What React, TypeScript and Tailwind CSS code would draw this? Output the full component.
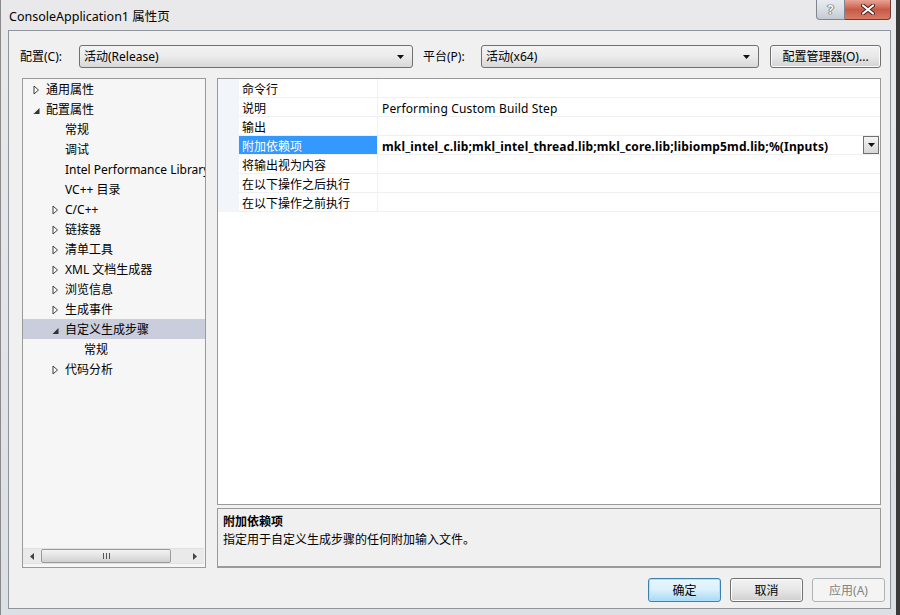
import React from "react";

const font = "font-['Noto_Sans','Noto_Sans_CJK_SC',sans-serif]";

type TreeItem = {
  label: string;
  level: number;
  kind: "collapsed" | "expanded" | "leaf";
  selected?: boolean;
};

const treeItems: TreeItem[] = [
  { label: "通用属性", level: 0, kind: "collapsed" },
  { label: "配置属性", level: 0, kind: "expanded" },
  { label: "常规", level: 1, kind: "leaf" },
  { label: "调试", level: 1, kind: "leaf" },
  { label: "Intel Performance Library", level: 1, kind: "leaf" },
  { label: "VC++ 目录", level: 1, kind: "leaf" },
  { label: "C/C++", level: 1, kind: "collapsed" },
  { label: "链接器", level: 1, kind: "collapsed" },
  { label: "清单工具", level: 1, kind: "collapsed" },
  { label: "XML 文档生成器", level: 1, kind: "collapsed" },
  { label: "浏览信息", level: 1, kind: "collapsed" },
  { label: "生成事件", level: 1, kind: "collapsed" },
  { label: "自定义生成步骤", level: 1, kind: "expanded", selected: true },
  { label: "常规", level: 2, kind: "leaf" },
  { label: "代码分析", level: 1, kind: "collapsed" },
];

const props = [
  { name: "命令行", value: "" },
  { name: "说明", value: "Performing Custom Build Step" },
  { name: "输出", value: "" },
  {
    name: "附加依赖项",
    value: "mkl_intel_c.lib;mkl_intel_thread.lib;mkl_core.lib;libiomp5md.lib;%(Inputs)",
    selected: true,
  },
  { name: "将输出视为内容", value: "" },
  { name: "在以下操作之后执行", value: "" },
  { name: "在以下操作之前执行", value: "" },
];

const indent = ["pl-[10px]", "pl-[29px]", "pl-[48px]"];

const Arrow = ({ kind }: { kind: TreeItem["kind"] }) => {
  if (kind === "collapsed")
    return (
      <svg width="7" height="10" viewBox="0 0 7 10" className="shrink-0">
        <path d="M1 1 L5.5 5 L1 9 Z" fill="#fff" stroke="#3c3c3c" strokeWidth="1" />
      </svg>
    );
  if (kind === "expanded")
    return (
      <svg width="7" height="10" viewBox="0 0 7 10" className="shrink-0">
        <path d="M6.5 3 L6.5 9 L0.5 9 Z" fill="#333" />
      </svg>
    );
  return <span className="w-[7px] shrink-0" />;
};

const DownTri = () => (
  <svg width="7" height="4" viewBox="0 0 7 4">
    <path d="M0 0 L7 0 L3.5 4 Z" fill="#111" />
  </svg>
);

const Combo = ({ text, w }: { text: string; w: string }) => (
  <div
    className={`${w} h-[23px] flex items-center justify-between px-[4px] pr-[8px] border border-[#707070] rounded-[3px] bg-gradient-to-b from-[#f3f3f3] via-[#ebebeb] to-[#d8d8d8] text-[12px] text-black`}
  >
    <span>{text}</span>
    <DownTri />
  </div>
);

const Button = ({
  text,
  variant,
}: {
  text: string;
  variant: "default" | "normal" | "disabled";
}) => {
  const style =
    variant === "default"
      ? "border-[#3c7fb1] bg-gradient-to-b from-[#eaf6fd] via-[#d9f0fc] to-[#a7d9f5] shadow-[inset_0_0_0_1px_#a9e1ff]"
      : variant === "disabled"
        ? "border-[#adb2b5] bg-[#f4f4f4] text-[#838383]"
        : "border-[#707070] bg-gradient-to-b from-[#f2f2f2] via-[#e6e6e6] to-[#cfcfcf] shadow-[inset_0_0_0_1px_#fcfcfc]";
  return (
    <div
      className={`w-[73px] h-[24px] flex items-center justify-center pt-[2px] border rounded-[3px] text-[12px] ${style}`}
    >
      {text}
    </div>
  );
};

export default function App() {
  return (
    <div
      className={`${font} w-[900px] h-[615px] flex flex-col bg-gradient-to-b from-[#e9e9eb] to-[#dcdfe3] border-l border-[#8a8a8a] overflow-hidden text-black`}
    >
      {/* title bar */}
      <div className="h-[30px] flex items-start shrink-0">
        <div className="pl-[8px] pt-[9px] text-[12.5px] leading-[16px] text-black flex-1">
          ConsoleApplication1 属性页
        </div>
        <div className="flex mr-[5px]">
          <div className="w-[29px] h-[20px] flex items-center justify-center border border-t-0 border-[#7d8690] rounded-bl-[4px] bg-gradient-to-b from-[#e8ecf0] via-[#d9dee4] to-[#c3cad2]">
            <span className="text-[13px] font-bold leading-none text-white [text-shadow:0_0_1px_#333,0_0_1px_#333,0_0_1px_#333]">
              ?
            </span>
          </div>
          <div className="w-[46px] h-[20px] flex items-center justify-center border border-t-0 border-l-0 border-[#6d3a36] rounded-br-[4px] bg-gradient-to-b from-[#e8a493] via-[#c75a48] to-[#d67b63]">
            <svg width="14" height="11" viewBox="0 0 14 11">
              <path d="M2 1.5 L12 9.5 M12 1.5 L2 9.5" stroke="#4a1f1a" strokeWidth="4" strokeLinecap="round" />
              <path d="M2 1.5 L12 9.5 M12 1.5 L2 9.5" stroke="#fff" strokeWidth="2.2" strokeLinecap="round" />
            </svg>
          </div>
        </div>
        <div className="w-[4px] self-stretch bg-[#3a3a3a]" />
      </div>

      {/* client area */}
      <div className="flex flex-1 min-h-0">
        <div className="ml-[7px] mb-[6px] w-[883px] flex flex-col bg-[#f0f0f0] border border-[#8e959c] text-[12px] leading-[16px]">
          {/* config row */}
          <div className="mt-[14px] flex items-center pl-[11px]">
            <span className="w-[59px]">配置(C):</span>
            <Combo text="活动(Release)" w="w-[334px]" />
            <span className="ml-[10px] w-[58px]">平台(P):</span>
            <Combo text="活动(x64)" w="w-[278px]" />
            <div className="ml-[11px] w-[111px] h-[23px] flex items-center justify-center border border-[#707070] rounded-[3px] bg-gradient-to-b from-[#f2f2f2] via-[#e8e8e8] to-[#d3d3d3] shadow-[inset_0_0_0_1px_#fbfbfb]">
              配置管理器(O)...
            </div>
          </div>

          {/* panels */}
          <div className="mt-[10px] flex gap-[11px] pl-[13px] h-[490px]">
            {/* tree */}
            <div className="w-[184px] h-full border border-[#9a9a9a] bg-[#f6f6f6] flex flex-col overflow-hidden">
              <div className="flex-1 flex flex-col">
                {treeItems.map((t, i) => (
                  <div
                    key={i}
                    className={`h-[20px] flex items-center pt-[2px] whitespace-nowrap ${indent[t.level]} ${t.selected ? "bg-[#cacddb]" : ""}`}
                  >
                    <Arrow kind={t.kind} />
                    <span className="ml-[6px]">{t.label}</span>
                  </div>
                ))}
              </div>
              {/* horizontal scrollbar */}
              <div className="h-[16px] mb-[3px] mr-[1px] flex items-center bg-[#eaeaea] border-y border-[#e0e0e0]">
                <div className="w-[18px] flex items-center justify-center">
                  <svg width="4" height="7" viewBox="0 0 4 7">
                    <path d="M4 0 L4 7 L0 3.5 Z" fill="#444" />
                  </svg>
                </div>
                <div className="w-[130px] h-[14px] flex items-center justify-center rounded-[2px] border border-[#9a9a9a] bg-gradient-to-b from-[#f3f3f3] via-[#e3e3e3] to-[#d0d0d0]">
                  <svg width="7" height="6" viewBox="0 0 7 6">
                    <path d="M0.5 0 V6 M3.5 0 V6 M6.5 0 V6" stroke="#555" strokeWidth="1" />
                  </svg>
                </div>
                <div className="flex-1 flex items-center justify-end pr-[7px]">
                  <svg width="4" height="7" viewBox="0 0 4 7">
                    <path d="M0 0 L0 7 L4 3.5 Z" fill="#444" />
                  </svg>
                </div>
              </div>
            </div>

            {/* property grid + description */}
            <div className="w-[664px] h-full flex flex-col gap-[3px]">
              <div className="h-[427px] border border-[#9a9a9a] bg-white flex flex-col">
                {props.map((p, i) => (
                  <div key={i} className="h-[19px] flex">
                    <div className="w-[21px] bg-[#f2f5fa]" />
                    <div
                      className={`w-[139px] flex items-center pl-[3px] pt-[3px] border-b border-r border-[#eef0f4] ${p.selected ? "bg-[#3399ff] text-white" : ""}`}
                    >
                      {p.name}
                    </div>
                    <div
                      className={`flex-1 flex items-center pl-[4px] border-b border-[#eef0f4] whitespace-nowrap ${p.selected ? "font-bold" : ""}`}
                    >
                      <span className="flex-1 pt-[3px] tracking-[0.15px]">{p.value}</span>
                      {p.selected && (
                        <div className="w-[16px] h-[18px] mr-[1px] flex items-center justify-center border border-[#707070] bg-gradient-to-b from-[#f4f4f4] to-[#d6d6d6]">
                          <DownTri />
                        </div>
                      )}
                    </div>
                  </div>
                ))}
              </div>
              <div className="flex-1 border border-[#9a9a9a] border-b-2 bg-[#f0f0f0] px-[5px] pt-[3px] flex flex-col">
                <span className="font-bold h-[19px] flex items-center">附加依赖项</span>
                <span className="h-[18px] flex items-center">指定用于自定义生成步骤的任何附加输入文件。</span>
              </div>
            </div>
          </div>

          {/* buttons */}
          <div className="mt-[10px] flex justify-end gap-[9px] pr-[5px]">
            <Button text="确定" variant="default" />
            <Button text="取消" variant="normal" />
            <Button text="应用(A)" variant="disabled" />
          </div>
        </div>
        <div className="flex-1" />
        <div className="w-[4px] bg-[#3a3a3a]" />
      </div>
    </div>
  );
}
